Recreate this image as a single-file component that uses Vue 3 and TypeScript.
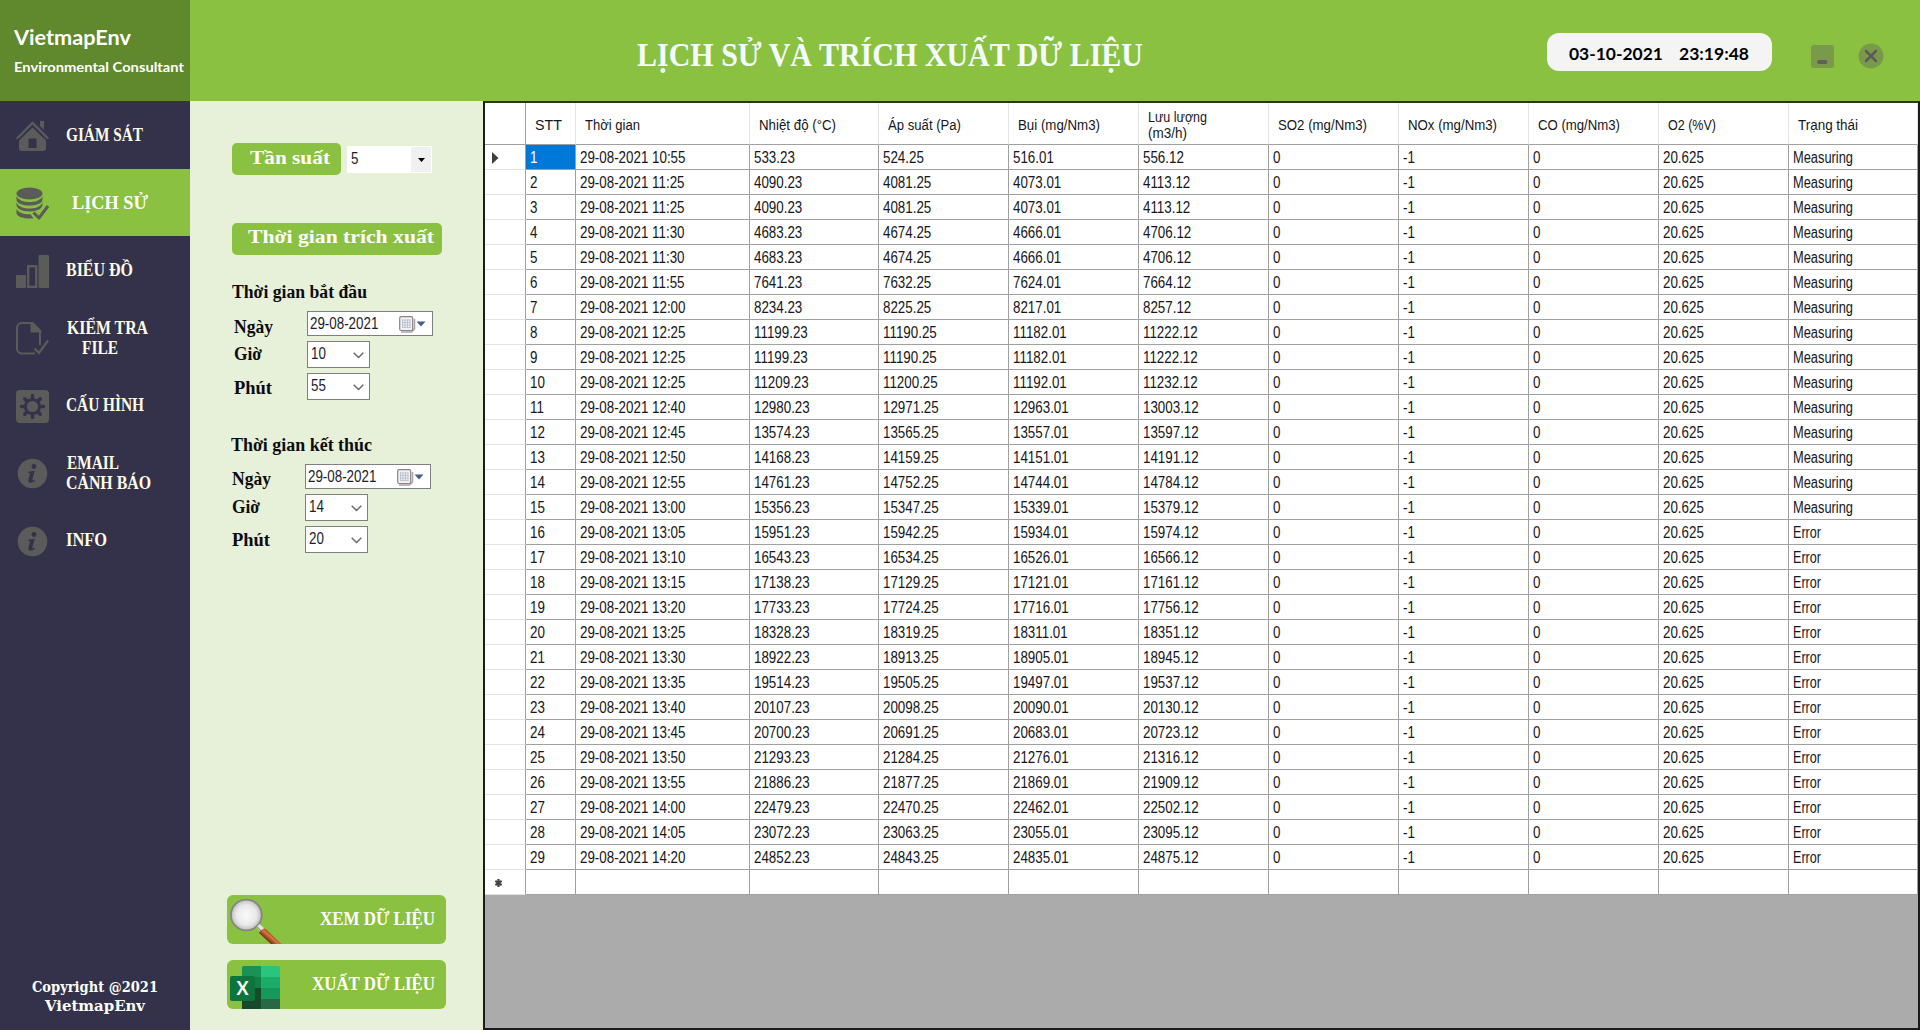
<script setup lang="ts">
import type { Directive } from 'vue'

interface Line { text: string; width: number; indent?: number }
interface NavItem { icon: string; lines: Line[]; active?: boolean }
interface Column { title: Line[]; width: number }
interface Picker { title: Line; date: string; hour: string; minute: string; end?: boolean }

// Condenses or widens a label to the given pixel width.
const vFit: Directive<HTMLElement, number> = {
  mounted(el, binding) {
    const natural = el.getBoundingClientRect().width
    el.style.transform = `scaleX(${binding.value / natural})`
    el.style.marginRight = `${binding.value - natural}px`
  },
}

const nav: NavItem[] = [
  { icon: 'home', lines: [{ text: 'GIÁM SÁT', width: 77 }] },
  { icon: 'db', lines: [{ text: 'LỊCH SỬ', width: 76, indent: 6 }], active: true },
  { icon: 'bars', lines: [{ text: 'BIỂU ĐỒ', width: 67 }] },
  { icon: 'file', lines: [{ text: 'KIỂM TRA', width: 81, indent: 1 }, { text: 'FILE', width: 36, indent: 16 }] },
  { icon: 'gear', lines: [{ text: 'CẤU HÌNH', width: 78 }] },
  { icon: 'info', lines: [{ text: 'EMAIL', width: 52, indent: 1 }, { text: 'CẢNH BÁO', width: 85 }] },
  { icon: 'info', lines: [{ text: 'INFO', width: 41 }] },
]

const pickers: Picker[] = [
  { title: { text: 'Thời gian bắt đầu', width: 135 }, date: '29-08-2021', hour: '10', minute: '55' },
  { title: { text: 'Thời gian kết thúc', width: 141 }, date: '29-08-2021', hour: '14', minute: '20', end: true },
]

const columns: Column[] = [
  { title: [{ text: 'STT', width: 27 }], width: 50 },
  { title: [{ text: 'Thời gian', width: 55 }], width: 174 },
  { title: [{ text: 'Nhiệt độ (°C)', width: 77 }], width: 129 },
  { title: [{ text: 'Áp suất (Pa)', width: 73 }], width: 130 },
  { title: [{ text: 'Bụi (mg/Nm3)', width: 82 }], width: 130 },
  { title: [{ text: 'Lưu lượng', width: 59 }, { text: '(m3/h)', width: 39 }], width: 130 },
  { title: [{ text: 'SO2 (mg/Nm3)', width: 89 }], width: 130 },
  { title: [{ text: 'NOx (mg/Nm3)', width: 89 }], width: 130 },
  { title: [{ text: 'CO (mg/Nm3)', width: 82 }], width: 130 },
  { title: [{ text: 'O2 (%V)', width: 48 }], width: 130 },
  { title: [{ text: 'Trạng thái', width: 60 }], width: 129 },
]

// Sample time and temperature; the other channels are fixed offsets of it.
const samples: [string, number][] = [
  ['10:55', 533], ['11:25', 4090], ['11:25', 4090], ['11:30', 4683], ['11:30', 4683],
  ['11:55', 7641], ['12:00', 8234], ['12:25', 11199], ['12:25', 11199], ['12:25', 11209],
  ['12:40', 12980], ['12:45', 13574], ['12:50', 14168], ['12:55', 14761], ['13:00', 15356],
  ['13:05', 15951], ['13:10', 16543], ['13:15', 17138], ['13:20', 17733], ['13:25', 18328],
  ['13:30', 18922], ['13:35', 19514], ['13:40', 20107], ['13:45', 20700], ['13:50', 21293],
  ['13:55', 21886], ['14:00', 22479], ['14:05', 23072], ['14:20', 24852],
]

const rows = samples.map(([time, t], i) => ({
  cells: [
    String(i + 1), `29-08-2021 ${time}`, `${t}.23`, `${t - 9}.25`, `${t - 17}.01`,
    `${t + 23}.12`, '0', '-1', '0', '20.625',
  ],
  status: i < 15 ? { text: 'Measuring', width: 60 } : { text: 'Error', width: 28 },
}))
</script>

<template>
  <div class="app">
    <aside class="side">
      <div class="brand">
        <div><span v-fit="117" class="fit brand-name">VietmapEnv</span></div>
        <div><span v-fit="170" class="fit brand-sub">Environmental Consultant</span></div>
      </div>
      <nav>
        <div v-for="(item, i) in nav" :key="i" class="nav-item" :class="{ active: item.active }">
          <svg class="nav-icon" viewBox="0 0 33 33" width="33" height="33">
            <g v-if="item.icon === 'home'" fill="#5b5b5a">
              <path d="M24 1h4v9l-4-4z" />
              <path d="M1.500 18 16.500 3 31.500 18" fill="none" stroke="#5b5b5a" stroke-width="2.400" stroke-linecap="round" />
              <path fill-rule="evenodd" d="M16.500 7.500 30 20.500v7.500a3 3 0 0 1-3 3H6a3 3 0 0 1-3-3v-7.500zM13.500 18.500a1 1 0 0 0-1 1V28h8v-8.500a1 1 0 0 0-1-1z" />
            </g>
            <g v-else-if="item.icon === 'db'" fill="#5b5b5a">
              <ellipse cx="13.500" cy="6.500" rx="13" ry="6" />
              <path d="M.500 9c2 5 9 6 13 6s11-1 13-6v3.500c0 8-26 8-26 0z" />
              <path d="M.500 15.500c2 5 9 6 13 6s11-1 13-6V18c0 3-5 6.500-13 6.500S.500 21 .500 18z" />
              <path d="M.500 22c2 4 8 5.500 14 5.300l3 4C8 32.500.500 29.500.500 26z" />
              <path d="M17.500 25.500l5.500 5.500 9-12" fill="none" stroke="#8bc140" stroke-width="6" />
              <path d="M17.500 25.500l5.500 5.500 9-12" fill="none" stroke="#5b5b5a" stroke-width="3" stroke-linejoin="round" />
            </g>
            <g v-else-if="item.icon === 'bars'" fill="#5b5b5a">
              <rect x="0" y="20" width="10" height="13" rx="1" />
              <rect x="12.200" y="11.200" width="8" height="20.600" fill="none" stroke="#5b5b5a" stroke-width="2.400" />
              <rect x="22.500" y="0" width="10.500" height="33" rx="1" />
            </g>
            <g v-else-if="item.icon === 'file'" fill="none" stroke="#5b5b5a" stroke-width="2">
              <path d="M19 31.500H6a5 5 0 0 1-5-5V6a5 5 0 0 1 5-5h10.500L24 8.500V23" />
              <path d="M15.500 1v8.500H24z" fill="#5b5b5a" />
              <path d="M18.500 26.500l4.500 4.500 9-12.500" stroke-width="2.300" />
            </g>
            <g v-else-if="item.icon === 'gear'">
              <rect width="33" height="33" rx="4" fill="#5b5b5a" />
              <g stroke="#33324a" stroke-width="3.400" stroke-linecap="round">
                <path d="M16.500 5.500v22M5.500 16.500h22M8.700 8.700l15.600 15.600M24.300 8.700 8.700 24.300" />
              </g>
              <circle cx="16.500" cy="16.500" r="8.600" fill="#33324a" />
              <circle cx="16.500" cy="16.500" r="5.600" fill="#5b5b5a" />
            </g>
            <g v-else>
              <circle cx="16.500" cy="16.500" r="14.800" fill="#5b5b5a" />
              <circle cx="18" cy="9.500" r="2.400" fill="#33324a" />
              <path d="M12.500 14.800 18.600 13.700 16.300 22.800q-.300 1.500 2.700-.300l-.300 1.400q-6.700 4-6.400-.600l1.800-7.300-1.900-.100z" fill="#33324a" />
            </g>
          </svg>
          <div class="nav-text">
            <div v-for="l in item.lines" :key="l.text" class="nav-line" :style="{ paddingLeft: (l.indent ?? 0) + 'px' }">
              <span v-fit="l.width" class="fit">{{ l.text }}</span>
            </div>
          </div>
        </div>
      </nav>
      <footer class="copy">
        <div><span v-fit="126" class="fit">Copyright @2021</span></div>
        <div><span v-fit="100" class="fit">VietmapEnv</span></div>
      </footer>
    </aside>

    <main class="main">
      <header class="top">
        <h1 class="title"><span v-fit="506" class="fit">LỊCH SỬ VÀ TRÍCH XUẤT DỮ LIỆU</span></h1>
        <div class="clock">
          <span v-fit="94" class="fit">03-10-2021</span>
          <span v-fit="70" class="fit">23:19:48</span>
        </div>
        <svg class="win-min" width="23" height="23" viewBox="0 0 23 23">
          <rect width="23" height="23" rx="3" fill="#799a4b" />
          <rect x="6.300" y="15" width="10" height="4" rx="1.500" fill="#5f6156" />
        </svg>
        <svg class="win-close" width="26" height="26" viewBox="0 0 26 26">
          <circle cx="13" cy="13" r="12.500" fill="#799a4b" />
          <path d="M8 8l10 10M18 8 8 18" stroke="#5b5b5a" stroke-width="2.600" stroke-linecap="round" />
        </svg>
      </header>

      <div class="body">
        <section class="panel">
          <div class="freq">
            <div class="tag freq-tag"><span v-fit="80" class="fit">Tần suất</span></div>
            <div class="flat-combo">
              <span class="val">5</span>
              <span class="flat-arrow"><svg width="7" height="4" viewBox="0 0 7 4"><path d="M0 0h7L3.500 4z" /></svg></span>
            </div>
          </div>
          <div class="tag range-tag"><span v-fit="186" class="fit">Thời gian trích xuất</span></div>

          <div v-for="p in pickers" :key="p.title.text" class="picker" :class="{ end: p.end }">
            <div class="picker-title"><span v-fit="p.title.width" class="fit">{{ p.title.text }}</span></div>
            <div class="row date-row">
              <div class="label"><span v-fit="39" class="fit">Ngày</span></div>
              <div class="date">
                <span class="val">{{ p.date }}</span>
                <svg width="27" height="17" viewBox="0 0 27 17">
                  <path d="M2 16h10.500l3-3V3" fill="none" stroke="#a9a5a5" stroke-width="1.500" />
                  <rect x=".700" y=".700" width="13" height="13.800" rx="1.500" fill="#f1f1f4" stroke="#8c8280" stroke-width="1.200" />
                  <path d="M3 4h8.500M3 6.500h8.500M3 9h8.500M3 11.500h8.500M3.500 3.500v8.500M6 3.500v8.500M8.500 3.500v8.500M11 3.500v8.500" stroke="#b9c0d0" stroke-width=".900" />
                  <path d="M17.500 5.500h9L22 10.500z" fill="#43608f" />
                </svg>
              </div>
            </div>
            <div class="row hour-row">
              <div class="label"><span v-fit="28" class="fit">Giờ</span></div>
              <div class="combo"><span class="val">{{ p.hour }}</span><svg width="11" height="7" viewBox="0 0 11 7"><path d="M.700.700 5.500 5.500 10.300.700" /></svg></div>
            </div>
            <div class="row minute-row">
              <div class="label"><span v-fit="38" class="fit">Phút</span></div>
              <div class="combo"><span class="val">{{ p.minute }}</span><svg width="11" height="7" viewBox="0 0 11 7"><path d="M.700.700 5.500 5.500 10.300.700" /></svg></div>
            </div>
          </div>

          <div class="actions">
            <button class="action">
              <svg width="56" height="49" viewBox="0 0 56 49">
                <defs>
                  <radialGradient id="glass"><stop offset="0" stop-color="#fafafa" /><stop offset=".65" stop-color="#e9e9e9" /><stop offset="1" stop-color="#bcbcbc" /></radialGradient>
                  <linearGradient id="handle" gradientUnits="userSpaceOnUse" x1="45" y1="38" x2="39" y2="45"><stop offset="0" stop-color="#8a3413" /><stop offset=".4" stop-color="#d67a42" /><stop offset="1" stop-color="#6d240b" /></linearGradient>
                </defs>
                <circle cx="19.300" cy="20" r="15.400" fill="url(#glass)" stroke="#858585" stroke-width="1.800" />
                <path d="M29.500 32l3-3 5.500 5-3.500 4z" fill="#e4e4e4" />
                <path d="M30 31.500l5.500 6" stroke="#777" stroke-width="1" />
                <path d="M32 38q2-4.500 6-4.500L54.500 49H44z" fill="url(#handle)" />
              </svg>
              <span v-fit="115" class="fit">XEM DỮ LIỆU</span>
            </button>
            <button class="action">
              <svg width="56" height="49" viewBox="0 0 56 49">
                <path d="M17 6h17v11H15V8a2 2 0 0 1 2-2z" fill="#189255" />
                <path d="M34 6h17a2 2 0 0 1 2 2v9H34z" fill="#2ac481" />
                <path d="M15 17h19v11H15z" fill="#108045" /><path d="M34 17h19v11H34z" fill="#1cac67" />
                <path d="M15 28h19v21H15z" fill="#174a2c" /><path d="M34 28h19v11H34z" fill="#16985a" />
                <path d="M34 39h19v10H34z" fill="#296844" />
                <rect x="3" y="16" width="25" height="25" rx="2" fill="#0c743c" />
                <text x="15.500" y="35" text-anchor="middle" font-family="Lato, sans-serif" font-weight="700" font-size="18" fill="#fff">X</text>
              </svg>
              <span v-fit="123" class="fit">XUẤT DỮ LIỆU</span>
            </button>
          </div>
        </section>

        <section class="grid-box">
          <table class="grid">
            <colgroup>
              <col class="marker-col" />
              <col v-for="(c, i) in columns" :key="i" :style="{ width: c.width + 'px' }" />
            </colgroup>
            <thead>
              <tr>
                <th></th>
                <th v-for="(c, i) in columns" :key="i">
                  <div v-for="l in c.title" :key="l.text" class="head-line"><span v-fit="l.width" class="fit">{{ l.text }}</span></div>
                </th>
              </tr>
            </thead>
            <tbody>
              <tr v-for="(r, i) in rows" :key="i">
                <td class="marker"><svg v-if="i === 0" width="7" height="12" viewBox="0 0 7 12"><path d="M0 0 6.500 6 0 12z" fill="#3f3f3f" /></svg></td>
                <td v-for="(c, j) in r.cells" :key="j" :class="{ selected: i === 0 && j === 0 }"><span class="val">{{ c }}</span></td>
                <td><span v-fit="r.status.width" class="fit">{{ r.status.text }}</span></td>
              </tr>
              <tr>
                <td class="marker star"><svg width="7" height="8" viewBox="0 0 7 8"><path d="M3.500 0v8M.300 2l6.400 4M6.700 2 .300 6" stroke="#444" stroke-width="2.200" /></svg></td>
                <td v-for="c in 11" :key="c"></td>
              </tr>
            </tbody>
          </table>
        </section>
      </div>
    </main>
  </div>
</template>

<style>
html, body { margin: 0; background: #e7f0d9; }
</style>

<style scoped>
.app {
  display: flex;
  width: 1920px;
  height: 1030px;
  overflow: hidden;
  font-family: "Liberation Serif", serif;
  font-weight: 700;
}
.app * { box-sizing: border-box; }
.fit { display: inline-block; transform-origin: 0 50%; white-space: nowrap; }
.val { display: inline-block; transform-origin: 0 50%; transform: scaleX(.835); white-space: nowrap; }

.side { display: flex; flex-direction: column; width: 190px; background: #33324a; color: #fdfbe6; }
.brand { height: 101px; padding: 25px 0 0 14px; background: #60882c; color: #fff; font-family: "Century Gothic", "URW Gothic", Lato, sans-serif; line-height: 24px; }
.brand-name { font-size: 20px; }
.brand-sub { font-size: 14px; margin-top: 4px; }
.nav-item { display: flex; align-items: center; height: 67.5px; padding-left: 16px; }
.nav-item.active { background: #8bc140; color: #fff; }
.nav-icon { margin-top: 3px; flex: none; }
.nav-text { margin-left: 17px; padding-top: 1px; }
.nav-line { height: 20px; line-height: 20px; font-size: 18px; }
.copy { margin-top: auto; padding-bottom: 14px; text-align: center; color: #fff; font-family: "DejaVu Serif", serif; font-size: 14px; line-height: 19px; }
.copy div { height: 19px; }

.main { display: flex; flex-direction: column; width: 1730px; }
.top { display: flex; height: 101px; background: #8bc140; }
.title { margin: 33px 0 0 447px; width: 507px; height: 44px; font-size: 34px; line-height: 44px; color: #f4fbff; }
.clock { display: flex; gap: 16px; margin: 33px 0 0 403px; width: 225px; height: 38px; padding-left: 22px; border-radius: 12px; background: #f4f4f4; color: #000; font-family: "Century Gothic", "URW Gothic", Lato, sans-serif; font-size: 17px; line-height: 42px; }
.win-min { margin: 45px 0 0 39px; }
.win-close { margin: 43px 0 0 24px; }
.body { display: flex; height: 929px; }

.panel { display: flex; flex-direction: column; width: 293px; background: #e7f0d9; color: #0c0c0c; }
.tag { height: 32px; border-radius: 5px; background: #8bc140; color: #fff; font-size: 18.5px; line-height: 30px; }
.freq { display: flex; margin: 42px 0 0 42px; }
.freq-tag { width: 109px; padding-left: 18px; }
.flat-combo { display: flex; justify-content: space-between; width: 85px; height: 27px; margin: 3px 0 0 6px; padding: 1px 1px 1px 4px; background: #fff; }
.flat-arrow { display: flex; align-items: center; justify-content: center; width: 20px; height: 25px; background: #f0f0f0; }
.panel .val { font: 400 16px/24px "Liberation Sans", sans-serif; color: #1c1c2c; }
.range-tag { width: 210px; margin: 48px 0 0 42px; padding-left: 16px; line-height: 28px; }
.picker { height: 152.500px; margin-left: 42px; padding-top: 26px; font-size: 18px; line-height: 22px; }
.picker.end { margin-left: 41px; }
.picker-title { height: 30px; }
.row { display: flex; }
.label { width: 75px; padding-left: 2px; }
.end .label { width: 74px; padding-left: 1px; }
.date-row { height: 30px; }
.date-row .label { padding-top: 5px; }
.hour-row { height: 32px; }
.hour-row .label { padding-top: 2px; }
.minute-row .label { padding-top: 4px; }
.end .date-row .label { padding-top: 4px; }
.end .minute-row .label { padding-top: 3px; }
.date, .combo { display: flex; justify-content: space-between; border: 1px solid #7f7f7f; background: #fff; }
.date { width: 126px; height: 25px; padding-left: 2px; line-height: 22px; }
.date svg { margin: 4px 6px 0 0; }
.panel .date .val { margin-right: -14px; line-height: 23px; }
.combo { width: 63px; height: 27px; padding-left: 3px; }
.combo svg { margin: 10px 5px 0 0; fill: none; stroke: #666; stroke-width: 1.400; }
.actions { display: flex; flex-direction: column; gap: 16px; margin: auto 0 21px 37px; }
.action { display: flex; justify-content: space-between; width: 219px; height: 49px; padding: 0 11px 0 0; border: 0; border-radius: 6px; background: #8bc140; color: #fff; font: inherit; font-size: 18.5px; line-height: 49px; }

.grid-box { width: 1437px; height: 929px; border: 2px solid #1b1b1b; border-top-color: #2c3320; background: #ababab; }
.grid { width: 1433px; table-layout: fixed; border-collapse: separate; border-spacing: 0; background: #fff; font: 400 16px/22px "Liberation Sans", sans-serif; color: #16161c; }
.marker-col { width: 41px; }
.grid th { height: 42px; padding: 2px 0 0 9px; border-right: 1px solid #e3e3e3; border-bottom: 1px solid #a0a0a0; text-align: left; font-weight: 400; font-size: 15.5px; vertical-align: middle; }
.head-line { height: 16px; line-height: 16px; }
.grid th:first-child { border-right-color: #a0a0a0; }
.grid td { height: 25px; padding: 1px 0 0 4px; border-right: 1px solid #a0a0a0; border-bottom: 1px solid #a0a0a0; vertical-align: middle; }
.grid td > span { height: 22px; vertical-align: top; }
.grid .marker { padding-left: 7px; border-bottom-color: #e3e3e3; }
.marker svg { display: block; }
.grid .star { padding: 2px 0 0 10px; }
.grid .selected { background: #0078d7; color: #fff; }
</style>
